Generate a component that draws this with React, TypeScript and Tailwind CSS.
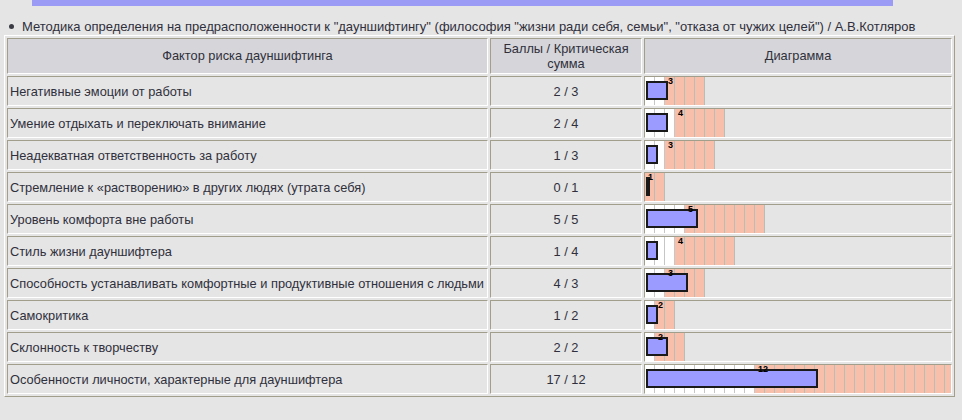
import React from 'react';

type Row = { name: string; score: number; crit: number; max: number };

const rows: Row[] = [
  { name: 'Негативные эмоции от работы', score: 2, crit: 3, max: 6 },
  { name: 'Умение отдыхать и переключать внимание', score: 2, crit: 4, max: 8 },
  { name: 'Неадекватная ответственность за работу', score: 1, crit: 3, max: 7 },
  { name: 'Стремление к «растворению» в других людях (утрата себя)', score: 0, crit: 1, max: 2 },
  { name: 'Уровень комфорта вне работы', score: 5, crit: 5, max: 12 },
  { name: 'Стиль жизни дауншифтера', score: 1, crit: 4, max: 9 },
  { name: 'Способность устанавливать комфортные и продуктивные отношения с людьми', score: 4, crit: 3, max: 6 },
  { name: 'Самокритика', score: 1, crit: 2, max: 3 },
  { name: 'Склонность к творчеству', score: 2, crit: 2, max: 4 },
  { name: 'Особенности личности, характерные для дауншифтера', score: 17, crit: 12, max: 31 },
];

const cell = 'border border-t-[#a19e8c] border-l-[#a19e8c] border-r-white border-b-white p-0';

// Scale of 10px units: white up to the critical value, salmon after it
const Chart: React.FC<{ row: Row }> = ({ row }) => (
  <div className="relative h-[28px] w-[306px] overflow-hidden">
    <div className="flex h-full">
      {Array.from({ length: row.max }, (_, i) => (
        <div
          key={i}
          className={
            i < row.crit - 1
              ? 'h-full w-[10px] shrink-0 border-r border-[#c6c6c6] bg-white'
              : 'h-full w-[10px] shrink-0 border-r border-[#b9bdb5] bg-[#f8bfab]'
          }
        />
      ))}
    </div>
    <div
      className="absolute left-[1px] top-[4px] h-[19px] border-2 border-[#1a1a1a] bg-[#9a9aff]"
      style={{ width: row.score * 10 + 2 }}
    />
    <span
      className="absolute top-0 text-[9px] font-bold leading-[9px] text-black"
      style={{ left: (row.crit - 1) * 10 + 3 }}
    >
      {row.crit}
    </span>
  </div>
);

export default function App() {
  return (
    <div className="min-h-[420px] w-[962px] bg-[#e5e5e5] font-['Liberation_Sans',Arial,sans-serif] text-[13px] text-[#30303c]">
      <div className="ml-[32px] h-[6px] w-[861px] bg-[#9b9bf6]" />

      <div className="mt-[12px] flex h-[17px] items-center pl-[9px]">
        <span className="mr-[8px] h-[5px] w-[5px] rounded-full bg-[#3a3a44]" />
        <span className="whitespace-nowrap">
          Методика определения на предрасположенности к "дауншифтингу" (философия "жизни ради себя, семьи", "отказа от чужих целей") / А.В.Котляров
        </span>
      </div>

      <table className="ml-[4px] w-[951px] table-fixed border-separate border-spacing-[2px] border border-t-white border-l-white border-r-[#a19e8c] border-b-[#a19e8c] text-[12.8px]">
        <colgroup>
          <col className="w-[481px]" />
          <col className="w-[152px]" />
          <col className="w-[308px]" />
        </colgroup>
        <thead>
          <tr className="h-[36px] bg-[#d6d6da]">
            <th className={`${cell} text-center font-normal`}>Фактор риска дауншифтинга</th>
            <th className={`${cell} text-center font-normal leading-[15px]`}>
              Баллы / Критическая
              <br />
              сумма
            </th>
            <th className={`${cell} text-center font-normal`}>Диаграмма</th>
          </tr>
        </thead>
        <tbody>
          {rows.map((row) => (
            <tr key={row.name} className="h-[30px]">
              <td className={`${cell} whitespace-nowrap pl-[2px] pt-[1px]`}>{row.name}</td>
              <td className={`${cell} pt-[1px] text-center`}>
                {row.score} / {row.crit}
              </td>
              <td className={`${cell} align-top`}>
                <Chart row={row} />
              </td>
            </tr>
          ))}
        </tbody>
      </table>
    </div>
  );
}
